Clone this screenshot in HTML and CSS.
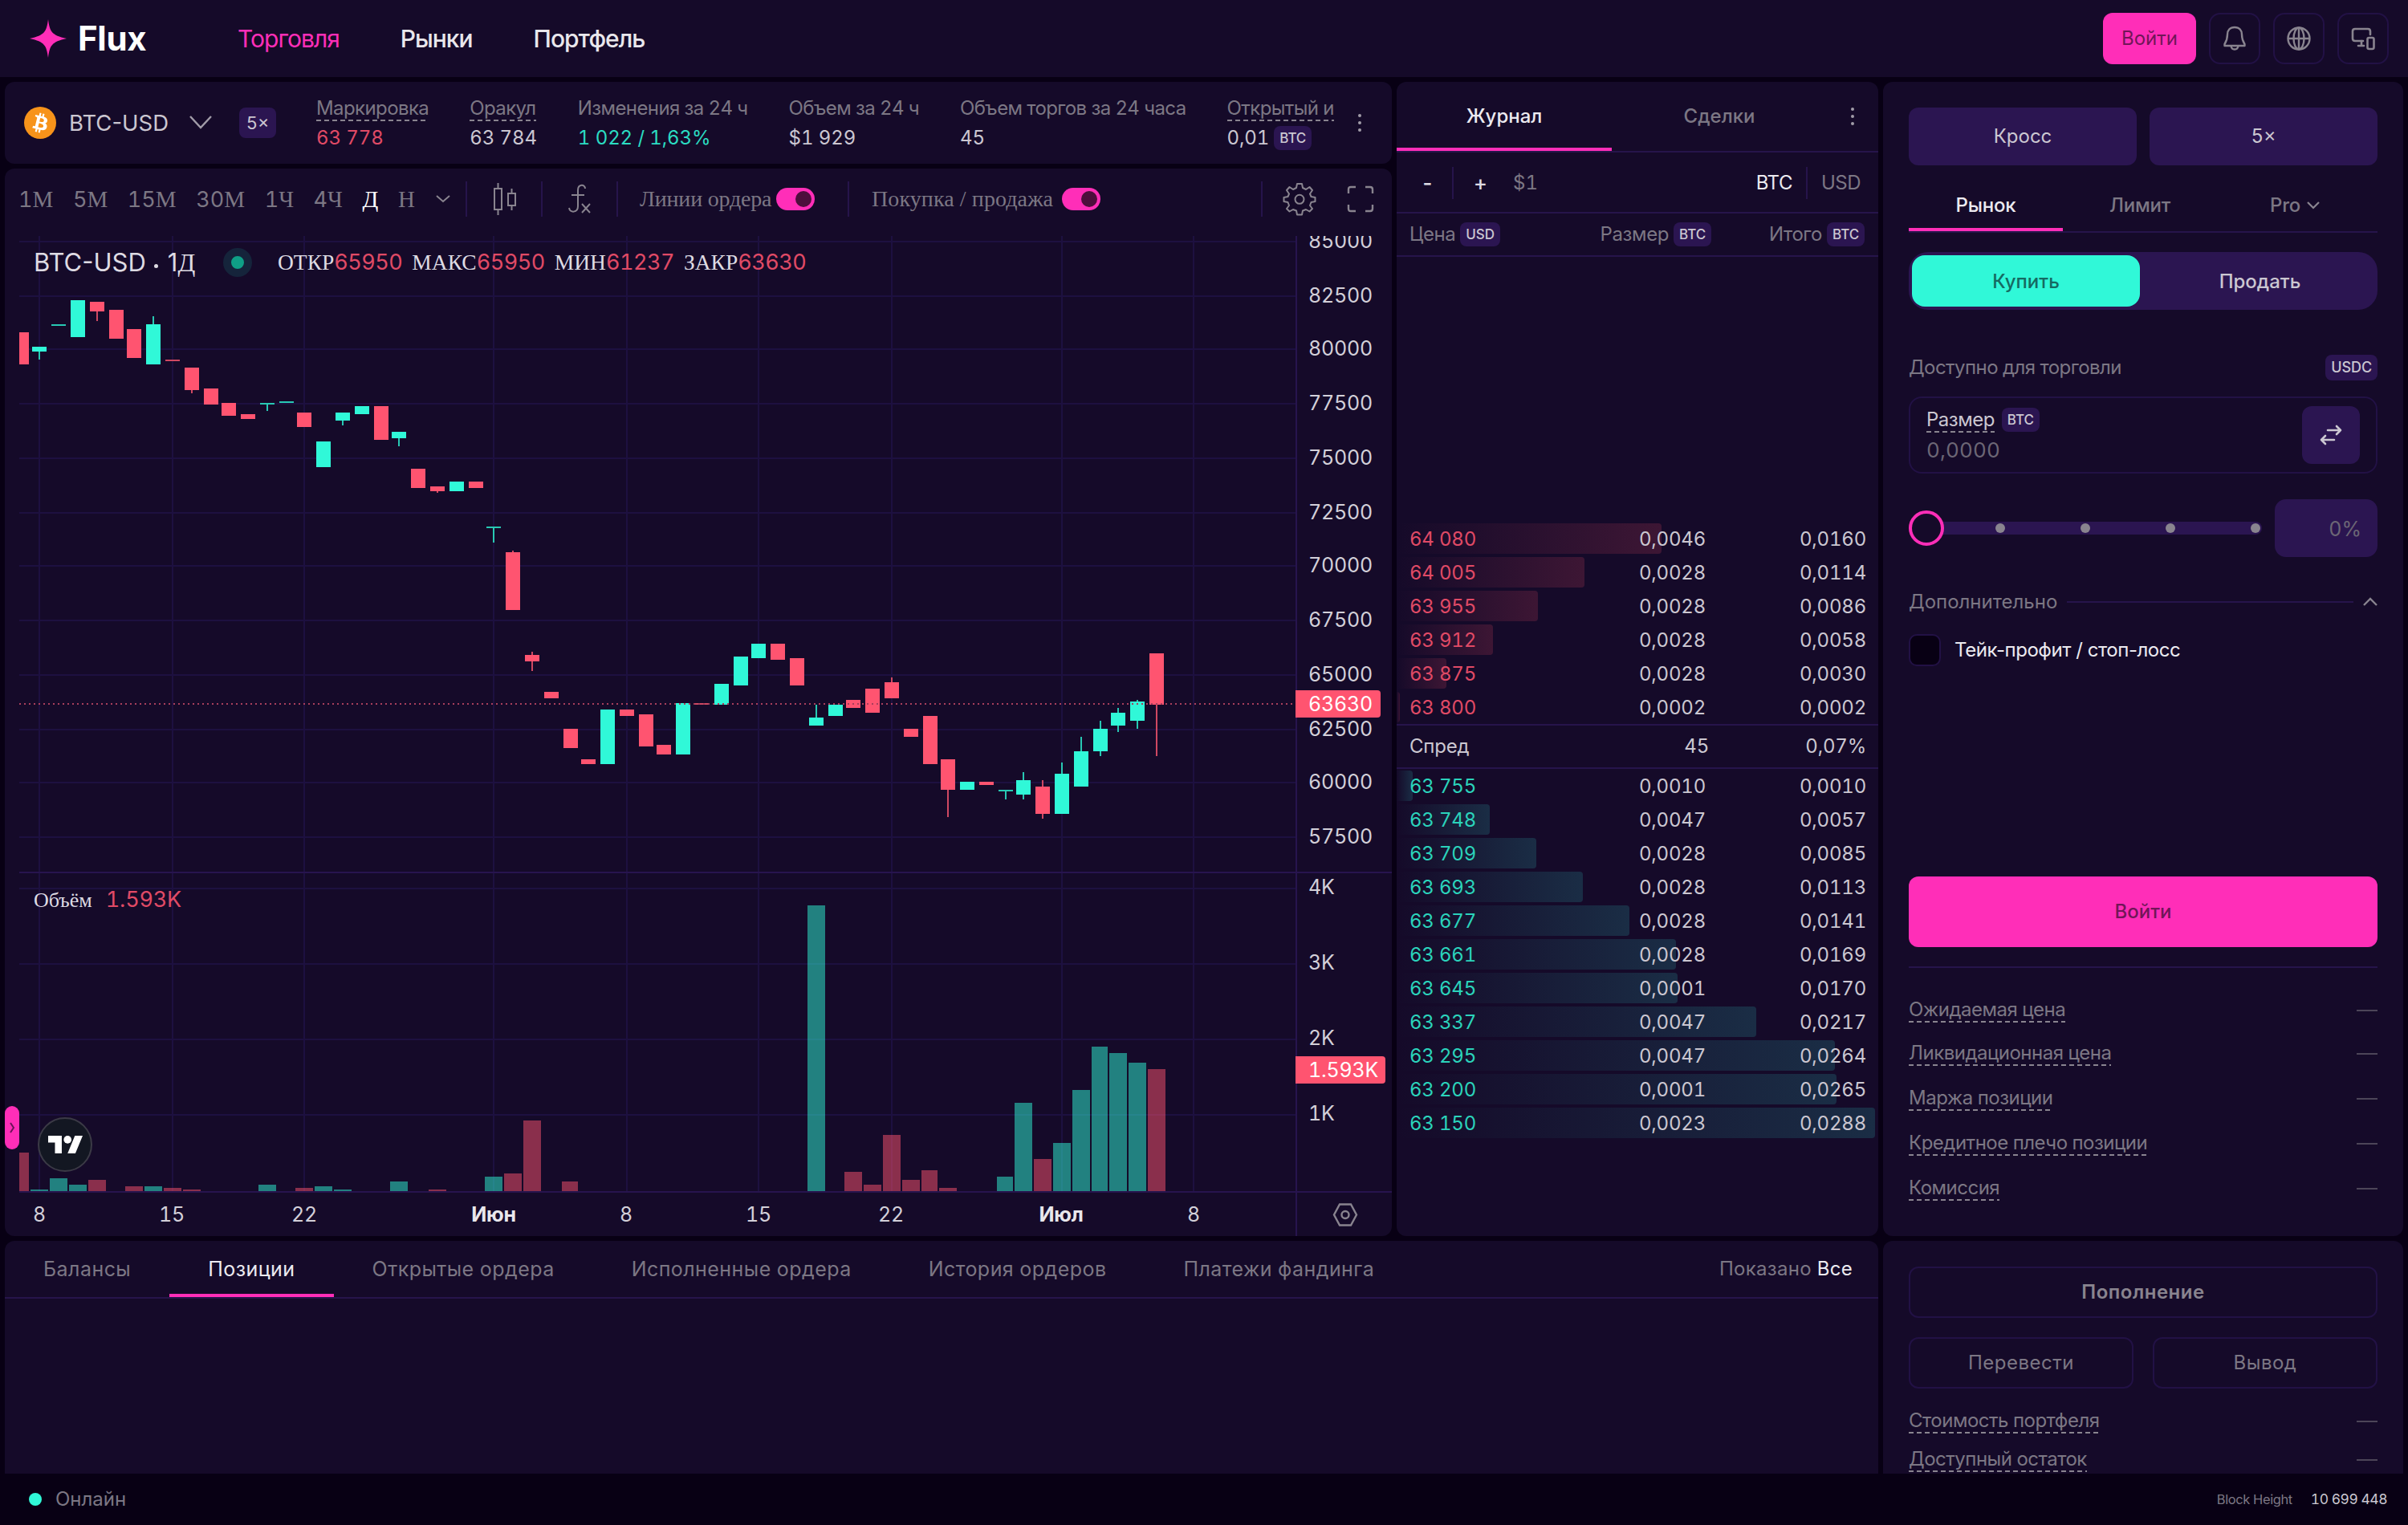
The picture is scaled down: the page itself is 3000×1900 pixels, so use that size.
FILE: index.html
```html
<!DOCTYPE html>
<html lang="ru">

<head>
    <meta charset="UTF-8">
    <meta name="viewport" content="width=device-width, initial-scale=1.0">
    <title>Flux</title>
    <link rel="stylesheet" href="styles.css">
</head>

<body>

    <header class="header">
        <div class="logo">
            <svg width="46" height="48" viewBox="0 0 46 48">
                <path fill="#ff2eb8" d="M23 0C25 15 27 20 46 24C27 28 25 33 23 48C21 33 19 28 0 24C19 20 21 15 23 0Z" />
            </svg>
            <span>Flux</span>
        </div>
        <nav class="nav">
            <a class="active">Торговля</a>
            <a>Рынки</a>
            <a>Портфель</a>
        </nav>
        <div class="header-actions">
            <button class="login">Войти</button>
            <button class="icon-btn">
                <svg width="30" height="34" viewBox="0 0 30 34" fill="none" stroke="#89848f" stroke-width="2.4" stroke-linejoin="round">
                    <path d="M15 3C9 3 6 7 6 12C6 18 5 20 2.500 24V26H27.500V24C25 20 24 18 24 12C24 7 21 3 15 3Z" />
                    <path d="M10.500 26C11 32 19 32 19.500 26" />
                </svg>
            </button>
            <button class="icon-btn">
                <svg width="32" height="32" viewBox="0 0 32 32" fill="none" stroke="#89848f" stroke-width="2.4">
                    <circle cx="16" cy="16" r="13.500" />
                    <ellipse cx="16" cy="16" rx="6.500" ry="13.500" />
                    <path d="M2.500 16H29.500M16 2.500V29.500" />
                </svg>
            </button>
            <button class="icon-btn">
                <svg width="32" height="32" viewBox="0 0 32 32" fill="none" stroke="#89848f" stroke-width="2.6" stroke-linecap="round" stroke-linejoin="round">
                    <path d="M16 19H6C4 19 3 18 3 16V7C3 5 4 4 6 4H22C24 4 25 5 25 7V11" />
                    <path d="M14 19V25M10 25H17" />
                    <rect x="21.500" y="15" width="8" height="14" rx="2" />
                </svg>
            </button>
        </div>
    </header>

    <main class="main">

        <section class="panel market">
            <svg class="coin" width="40" height="40" viewBox="0 0 32 32">
                <circle cx="16" cy="16" r="16" fill="#f7931a" />
                <path fill="#fff" d="M23.189 14.020c.314-2.096-1.283-3.223-3.465-3.975l.708-2.840-1.728-.430-.690 2.765c-.454-.114-.920-.220-1.385-.326l.695-2.783L15.596 6l-.708 2.839c-.376-.086-.746-.170-1.104-.260l.002-.009-2.384-.595-.460 1.846s1.283.294 1.256.312c.700.175.826.638.805 1.006l-.806 3.235c.048.012.110.030.180.057l-.183-.045-1.130 4.532c-.086.212-.303.531-.793.410.018.025-1.256-.313-1.256-.313l-.858 1.978 2.250.561c.418.105.828.215 1.231.318l-.715 2.872 1.727.430.708-2.840c.472.127.930.245 1.378.357l-.706 2.828 1.728.430.715-2.866c2.948.558 5.164.333 6.097-2.333.752-2.146-.037-3.385-1.588-4.192 1.130-.260 1.980-1.003 2.207-2.538zm-3.950 5.538c-.533 2.147-4.148.986-5.320.695l.950-3.805c1.172.293 4.929.872 4.370 3.110zm.535-5.569c-.487 1.953-3.495.960-4.470.717l.860-3.450c.975.243 4.118.696 3.610 2.733z" />
            </svg>
            <span class="pair">BTC-USD</span>
            <svg class="pair-arrow" width="30" height="20" viewBox="0 0 30 20" fill="none" stroke="#a19ca8" stroke-width="2.4">
                <path d="M2 2L15 16L28 2" />
            </svg>
            <span class="lev">5×</span>
            <div class="stats">
                <div class="stat"><span class="label dashed">Маркировка</span><span class="value red">63 778</span></div>
                <div class="stat"><span class="label dashed">Оракул</span><span class="value">63 784</span></div>
                <div class="stat"><span class="label">Изменения за 24 ч</span><span class="value green">1 022 / 1,63%</span></div>
                <div class="stat"><span class="label">Объем за 24 ч</span><span class="value">$1 929</span></div>
                <div class="stat"><span class="label">Объем торгов за 24 часа</span><span class="value">45</span></div>
                <div class="stat"><span class="label dashed">Открытый интерес</span><span class="value">0,01 <i class="tag">BTC</i></span></div>
            </div>
            <span class="kebab"><i></i><i></i><i></i></span>
        </section>

        <section class="panel chart-panel">
            <div class="toolbar">
                <div class="intervals">
                    <span>1<b>М</b></span>
                    <span>5<b>М</b></span>
                    <span>15<b>М</b></span>
                    <span>30<b>М</b></span>
                    <span>1<b>Ч</b></span>
                    <span>4<b>Ч</b></span>
                    <span class="on"><b>Д</b></span>
                    <span><b>Н</b></span>
                </div>
                <svg class="more" width="18" height="12" viewBox="0 0 18 12" fill="none" stroke="#89848f" stroke-width="2"><path d="M1 2L9 9L17 2" /></svg>
                <i class="sep"></i>
                <svg class="tool-candles" width="30" height="42" viewBox="0 0 30 42" fill="none" stroke="#89848f" stroke-width="2">
                    <rect x="2" y="8" width="9" height="26" />
                    <rect x="19" y="14" width="9" height="15" />
                    <path d="M6.500 1V8M6.500 34V41M23.500 8V14M23.500 29V35" />
                </svg>
                <i class="sep"></i>
                <svg class="tool-fx" width="30" height="38" viewBox="0 0 30 38" fill="none" stroke="#89848f" stroke-width="2">
                    <path d="M22 6C22 0 13 0 13 8V28C13 36 3 37 2 30M5 14H21" />
                    <path d="M18 25L28 36M28 25L18 36" />
                </svg>
                <i class="sep"></i>
                <span class="switch-label lines">Линии ордера</span>
                <i class="switch"></i>
                <i class="sep s4"></i>
                <span class="switch-label trades">Покупка / продажа</span>
                <i class="switch"></i>
                <i class="sep s5"></i>
                <svg class="tool-gear" width="42" height="42" viewBox="0 0 42 42" fill="none" stroke="#89848f" stroke-width="2" stroke-linejoin="round">
                    <path d="M18 2H24L25 7L29 9L33.500 6L37 10L34 14.500L35.500 18L40.500 19V24L35.500 25L34 29L37 33L33.500 36.500L29 34L25 35.500L24 40.500H18L17 35.500L13 34L8.500 36.500L5 33L8 29L6.500 25L1.500 24V19L6.500 18L8 14.500L5 10L8.500 6L13 9L17 7Z" />
                    <circle cx="21" cy="21.300" r="5.500" />
                </svg>
                <svg class="tool-full" width="34" height="34" viewBox="0 0 34 34" fill="none" stroke="#89848f" stroke-width="2.400">
                    <path d="M2 10V5Q2 2 5 2H11M23 2H29Q32 2 32 5V10M32 24V29Q32 32 29 32H23M11 32H5Q2 32 2 29V24" />
                </svg>
            </div>
            <div class="chart">
                <svg id="chart" width="1728" height="1246" viewBox="6 294 1728 1246"></svg>
                <div class="legend">
                    <span class="legend-name">BTC-USD<i></i>1<b>Д</b></span>
                    <i class="status"></i>
                    <span class="ohlc"><b>ОТКР</b><em>65950</em></span>
                    <span class="ohlc"><b>МАКС</b><em>65950</em></span>
                    <span class="ohlc"><b>МИН</b><em>61237</em></span>
                    <span class="ohlc"><b>ЗАКР</b><em>63630</em></span>
                </div>
                <div class="legend-vol"><b>Объём</b><em>1.593K</em></div>
                <div class="tv">
                    <svg width="43" height="22" viewBox="0 4 35.500 18" fill="#fff">
                        <path d="M14 22H7V11H0V4h14v18zM28 22h-8l7.500-18h8L28 22z" />
                        <circle cx="20" cy="8" r="4" />
                    </svg>
                </div>
                <div class="handle">
                    <svg width="8" height="14" viewBox="0 0 8 14" fill="none" stroke="#6b1259" stroke-width="2"><path d="M2 1L6 7L2 13" /></svg>
                </div>
            </div>
        </section>

        <section class="panel book">
            <div class="book-tabs">
                <span class="on">Журнал</span>
                <span>Сделки</span>
                <span class="kebab"><i></i><i></i><i></i></span>
            </div>
            <div class="book-step">
                <span class="minus">-</span>
                <i class="sep"></i>
                <span class="plus">+</span>
                <span class="step">$1</span>
                <span class="unit on">BTC</span>
                <i class="sep"></i>
                <span class="unit">USD</span>
            </div>
            <div class="book-head">
                <span>Цена <i class="tag">USD</i></span>
                <span>Размер <i class="tag">BTC</i></span>
                <span>Итого <i class="tag">BTC</i></span>
            </div>
            <div class="asks" id="asks"></div>
            <div class="spread"><span>Спред</span><span>45</span><span>0,07%</span></div>
            <div class="bids" id="bids"></div>
        </section>

        <section class="panel order">
            <div class="pair-btns">
                <button>Кросс</button>
                <button>5×</button>
            </div>
            <div class="order-tabs">
                <span class="on">Рынок</span>
                <span>Лимит</span>
                <span>Pro <svg width="16" height="10" viewBox="0 0 16 10" fill="none" stroke="#89848f" stroke-width="2.200"><path d="M1 1L8 8L15 1" /></svg></span>
            </div>
            <div class="side">
                <span class="buy">Купить</span>
                <span class="sell">Продать</span>
            </div>
            <div class="avail"><span>Доступно для торговли</span><i class="tag big">USDC</i></div>
            <div class="size">
                <div class="size-text">
                    <div class="size-label"><span class="dashed">Размер</span><i class="tag">BTC</i></div>
                    <div class="size-value">0,0000</div>
                </div>
                <button class="swap">
                    <svg width="28" height="28" viewBox="0 0 28 28" fill="none" stroke="#cbc7d1" stroke-width="2.600" stroke-linecap="round" stroke-linejoin="round">
                        <path d="M10 8H26M21 3L26 8L21 13M18 20H2M7 15L2 20L7 25" />
                    </svg>
                </button>
            </div>
            <div class="slider-row">
                <div class="slider">
                    <i class="thumb"></i><i class="dot"></i><i class="dot"></i><i class="dot"></i><i class="dot"></i>
                </div>
                <div class="pct">0%</div>
            </div>
            <div class="extra">
                <span>Дополнительно</span>
                <i class="rule"></i>
                <svg width="18" height="12" viewBox="0 0 18 12" fill="none" stroke="#89848f" stroke-width="2.400"><path d="M1 10L9 2L17 10" /></svg>
            </div>
            <div class="check"><i class="box"></i><span>Тейк-профит / стоп-лосс</span></div>
            <button class="submit">Войти</button>
            <div class="details">
                <div><span class="dashed">Ожидаемая цена</span><i></i></div>
                <div><span class="dashed">Ликвидационная цена</span><i></i></div>
                <div><span class="dashed">Маржа позиции</span><i></i></div>
                <div><span class="dashed">Кредитное плечо позиции</span><i></i></div>
                <div><span class="dashed">Комиссия</span><i></i></div>
            </div>
        </section>

        <section class="panel positions">
            <div class="pos-tabs">
                <span>Балансы</span>
                <span class="on">Позиции</span>
                <span>Открытые ордера</span>
                <span>Исполненные ордера</span>
                <span>История ордеров</span>
                <span>Платежи фандинга</span>
                <div class="shown">Показано <em>Все</em></div>
            </div>
        </section>

        <section class="panel account">
            <button class="deposit">Пополнение</button>
            <div class="account-btns">
                <button>Перевести</button>
                <button>Вывод</button>
            </div>
            <div class="account-rows">
                <div><span class="dashed">Стоимость портфеля</span><i></i></div>
                <div><span class="dashed">Доступный остаток</span><i></i></div>
            </div>
        </section>

    </main>

    <footer class="footer">
        <i class="online"></i>
        <span class="online-text">Онлайн</span>
        <span class="block">Block Height</span>
        <span class="block-num">10 699 448</span>
    </footer>

    <script>

        // [day, color, body top, body bottom, high, low]
        let candles = [
            [-1, "r", 414, 454], [0, "g", 432, 438, 432, 448], [1, "g", 404, 406], [2, "g", 374, 420],
            [3, "r", 376, 388, 376, 400], [4, "r", 386, 422], [5, "r", 410, 446], [6, "g", 404, 454, 394, 454],
            [7, "r", 448, 450], [8, "r", 458, 486, 458, 490], [9, "r", 484, 504], [10, "r", 502, 518],
            [11, "r", 516, 522], [12, "g", 502, 504, 502, 512], [13, "g", 500, 502], [14, "r", 514, 532],
            [15, "g", 550, 582], [16, "g", 514, 524, 514, 530], [17, "g", 506, 516], [18, "r", 506, 548],
            [19, "g", 538, 546, 538, 556], [20, "r", 584, 608], [21, "r", 606, 612, 606, 614], [22, "g", 600, 612],
            [23, "r", 600, 608], [24, "g", 656, 658, 656, 676], [25, "r", 688, 760, 686, 760], [26, "r", 816, 824, 812, 836],
            [27, "r", 862, 870], [28, "r", 908, 932], [29, "r", 946, 952], [30, "g", 884, 952],
            [31, "r", 884, 892], [32, "r", 890, 930], [33, "r", 928, 940], [34, "g", 876, 940],
            [35, "r", 876, 878], [36, "g", 852, 878], [37, "g", 818, 854], [38, "g", 802, 820],
            [39, "r", 802, 822], [40, "r", 820, 854], [41, "g", 894, 904, 878, 904], [42, "g", 878, 892],
            [43, "r", 872, 882], [44, "r", 858, 888], [45, "r", 850, 870, 844, 870], [46, "r", 908, 918],
            [47, "r", 892, 952], [48, "r", 946, 984, 946, 1018], [49, "g", 974, 984], [50, "r", 974, 978],
            [51, "g", 984, 986, 984, 996], [52, "g", 972, 990, 962, 996], [53, "r", 980, 1014, 972, 1020], [54, "g", 964, 1014, 950, 1014],
            [55, "g", 936, 980, 918, 980], [56, "g", 908, 936, 898, 942], [57, "g", 888, 904, 882, 912], [58, "g", 874, 898, 872, 908],
            [59, "r", 814, 878, 814, 942]
        ];

        // [day, color, bar top]
        let volumes = [
            [-1, "r", 1436], [0, "g", 1482], [1, "g", 1468], [2, "g", 1476], [3, "r", 1470], [5, "r", 1478], [6, "g", 1478],
            [7, "r", 1480], [8, "r", 1482], [12, "g", 1476], [14, "r", 1480], [15, "g", 1478], [16, "g", 1482], [19, "g", 1472],
            [21, "r", 1482], [24, "g", 1466], [25, "r", 1462], [26, "r", 1396], [28, "r", 1472], [41, "g", 1128], [43, "r", 1460],
            [44, "r", 1476], [45, "r", 1414], [46, "r", 1470], [47, "r", 1458], [48, "r", 1480], [51, "g", 1466], [52, "g", 1374],
            [53, "r", 1444], [54, "g", 1424], [55, "g", 1358], [56, "g", 1304], [57, "g", 1312], [58, "g", 1324], [59, "r", 1332]
        ];

        let prices = [85000, 82500, 80000, 77500, 75000, 72500, 70000, 67500, 65000, 62500, 60000, 57500];
        let days = [[49, "8"], [214, "15"], [379, "22"], [615, "Июн"], [780, "8"], [945, "15"], [1110, "22"], [1322, "Июл"], [1487, "8"]];

        let chart = document.querySelector("#chart");
        let out = "";

        function dayX(i) {
            return 2 * Math.round((48.8 + 23.58 * i) / 2) + 1;
        }

        function rect(x, y, w, h, cls) {
            let left = Math.max(x, 24);
            out += `<rect x="${left}" y="${y}" width="${w - (left - x)}" height="${h}" class="${cls}"/>`;
        }

        function text(x, y, str, cls) {
            out += `<text x="${x}" y="${y}" class="${cls}">${str}</text>`;
        }

        prices.forEach((p, i) => {
            let y = 300 + Math.round(i * 33.74) * 2;
            rect(24, y, 1590, 2, "grid");
            text(1630, y + 8.5, p, "axis");
        });
        ["4K", "3K", "2K", "1K"].forEach((k, i) => {
            let y = 1106 + i * 94;
            rect(24, y, 1590, 2, "grid");
            text(1630, y + 8, k, "axis");
        });
        for (let [x, label] of days) {
            rect(x % 2 ? x - 1 : x, 294, 2, 1190, "grid");
            text(x, 1522, label, label.length > 2 ? "time month" : "time");
        }
        for (let [i, c, top] of volumes) {
            rect(dayX(i) - 11, top, dayX(i + 1) - dayX(i) - 2, 1484 - top, "vol-" + c);
        }
        for (let [i, c, top, bottom, high, low] of candles) {
            let x = dayX(i);
            if (high) rect(x - 1, high, 2, low - high, "wick-" + c);
            rect(x - 9, top, 18, bottom - top, bottom - top < 3 ? "wick-" + c : "fill-" + c);
        }
        out += `<line x1="24" y1="877" x2="1614" y2="877" class="last"/>`;
        rect(24, 1086, 1710, 2, "axis-line");
        rect(24, 1484, 1710, 2, "axis-line");
        rect(1614, 294, 2, 1246, "axis-line");
        out += `<path d="M1614 860H1716Q1720 860 1720 864V890Q1720 894 1716 894H1614Z" class="fill-r"/>`;
        out += `<path d="M1614 1316H1722Q1726 1316 1726 1320V1346Q1726 1350 1722 1350H1614Z" class="fill-r"/>`;
        text(1630, 886, "63630", "axis tag-text");
        text(1630, 1342, "1.593K", "axis tag-text");
        out += `<path d="M1669 1500.500H1683L1690 1513.500L1683 1526.500H1669L1662 1513.500Z" class="hex"/><circle cx="1676" cy="1513.500" r="4.500" class="hex"/>`;
        chart.innerHTML = out;

        let asks = [["64 080", "0,0046", "0,0160", 330], ["64 005", "0,0028", "0,0114", 234], ["63 955", "0,0028", "0,0086", 176],
            ["63 912", "0,0028", "0,0058", 120], ["63 875", "0,0028", "0,0030", 62], ["63 800", "0,0002", "0,0002", 4]];
        let bids = [["63 755", "0,0010", "0,0010", 20], ["63 748", "0,0047", "0,0057", 116], ["63 709", "0,0028", "0,0085", 174],
            ["63 693", "0,0028", "0,0113", 232], ["63 677", "0,0028", "0,0141", 290], ["63 661", "0,0028", "0,0169", 348],
            ["63 645", "0,0001", "0,0170", 350], ["63 337", "0,0047", "0,0217", 448], ["63 295", "0,0047", "0,0264", 546],
            ["63 200", "0,0001", "0,0265", 548], ["63 150", "0,0023", "0,0288", 596]];

        function fillBook(id, rows) {
            document.getElementById(id).innerHTML = rows.map(([price, size, total, w]) =>
                `<div class="book-row" style="--depth: ${w}px"><span>${price}</span><span>${size}</span><span>${total}</span></div>`).join("");
        }

        fillBook("asks", asks);
        fillBook("bids", bids);

    </script>
</body>

</html>
```

FILE: styles.css
```css
* {
    box-sizing: border-box;
}

body {
    margin: 0;
    width: 3000px;
    height: 1900px;
    overflow: hidden;
    display: flex;
    flex-direction: column;
    background: #080014;
    color: #cbc7d1;
    font-family: Inter, "Liberation Sans", sans-serif;
    font-size: 24px;
    line-height: 30px;
    font-variant-numeric: tabular-nums;
}

button {
    font: inherit;
    color: inherit;
    padding: 0;
    border: 0;
    background: none;
    display: flex;
    align-items: center;
    justify-content: center;
}

i, em {
    font-style: normal;
}

svg {
    display: block;
    flex: none;
}

.panel {
    background: #150a29;
    border-radius: 12px;
    overflow: hidden;
}

.red {
    color: #e04a66;
}

.green {
    color: #2bdcc2;
}

.tag {
    display: inline-flex;
    align-items: center;
    justify-content: center;
    height: 30px;
    padding: 0 7px;
    border-radius: 8px;
    background: #2b1551;
    color: #cbc7d1;
    font-size: 17px;
    font-weight: 500;
    letter-spacing: -.1px;
}

.tag.big {
    height: 32px;
    font-size: 18px;
}

.dashed {
    position: relative;
}

.dashed::after {
    content: "";
    position: absolute;
    left: 0;
    right: 0;
    bottom: -1px;
    height: 2px;
    background: repeating-linear-gradient(90deg, #89848f 0 6px, transparent 6px 10px);
}

.kebab {
    display: flex;
    flex-direction: column;
    align-items: center;
    gap: 5px;
}

.kebab i {
    width: 4px;
    height: 4px;
    border-radius: 2px;
    background: #a19ca8;
}

.sep {
    width: 2px;
    background: #26144b;
}

/* header */

.header {
    height: 96px;
    flex: none;
    display: flex;
    align-items: center;
    background: #150a29;
    padding: 0 24px 0 37px;
}

.logo {
    display: flex;
    align-items: center;
    width: 259px;
    gap: 14px;
    color: #fff;
    font-size: 42px;
    font-weight: 700;
    letter-spacing: -.3px;
}

.nav {
    display: flex;
    gap: 76px;
    font-size: 30px;
    font-weight: 500;
    letter-spacing: -1px;
    color: #e9e7ec;
}

.nav .active {
    color: #ff2eb8;
    font-weight: 400;
}

.header-actions {
    margin-left: auto;
    display: flex;
    gap: 16px;
}

.login {
    width: 116px;
    height: 64px;
    border-radius: 12px;
    background: #ff2eb8;
    color: #711658;
}

.icon-btn {
    width: 64px;
    height: 64px;
    border: 2px solid #221145;
    border-radius: 14px;
}

.main {
    flex: none;
    height: 1740px;
    padding: 6px 6px 0;
    display: grid;
    grid-template-columns: 1728px 600px 648px;
    grid-template-rows: 102px 1330px 290px;
    gap: 6px;
}

/* market bar */

.market {
    display: flex;
    align-items: center;
    padding: 0 38px 0 24px;
}

.pair {
    margin-left: 16px;
    width: 126px;
    font-size: 27.5px;
    font-variant-numeric: normal;
    white-space: nowrap;
}

.pair-arrow {
    margin-left: 23px;
}

.lev {
    margin-left: 33px;
    width: 46px;
    height: 38px;
    display: flex;
    align-items: center;
    justify-content: center;
    border-radius: 8px;
    background: #2b1551;
    font-size: 22px;
    flex: none;
}

.stats {
    margin-left: 50px;
    width: 1268px;
    flex: none;
    display: flex;
    gap: 51px;
    overflow: hidden;
    white-space: nowrap;
}

.stat {
    display: flex;
    flex-direction: column;
    align-items: flex-start;
    gap: 7px;
}

.stat .label {
    color: #7c7784;
    letter-spacing: -.6px;
}

.stat .value {
    display: flex;
    align-items: center;
    gap: 6px;
    height: 30px;
    letter-spacing: -.1px;
}

.market .kebab {
    margin-left: auto;
}

/* chart */

.chart-panel {
    display: flex;
    flex-direction: column;
}

.toolbar {
    height: 84px;
    flex: none;
    display: flex;
    align-items: center;
    padding: 0 22px 8px 17px;
    color: #7c7784;
    font-size: 27px;
}

.intervals {
    width: 494px;
    display: flex;
    justify-content: space-between;
}

.toolbar b, .legend b, .legend-vol b, .switch-label {
    font-family: "Liberation Serif", serif;
    font-weight: 400;
}

.toolbar b {
    font-size: 29px;
}

.intervals .on {
    color: #fff;
}

.more {
    margin: 0 19px 0 26px;
}

.toolbar .sep {
    height: 44px;
}

.tool-candles {
    margin: 0 30px 0 32px;
}

.tool-fx {
    margin: 0 31px;
}

.switch-label {
    font-size: 28px;
    white-space: nowrap;
}

.lines {
    margin-left: 27px;
    width: 170px;
    letter-spacing: -.2px;
}

.trades {
    margin-left: 28px;
    width: 237px;
    letter-spacing: .1px;
}

.switch {
    width: 48px;
    height: 28px;
    border-radius: 14px;
    background: #ff2eb8;
    display: flex;
    align-items: center;
    justify-content: flex-end;
    padding-right: 4px;
}

.switch::after {
    content: "";
    width: 20px;
    height: 20px;
    border-radius: 50%;
    background: #4d0e3c;
}

.s4 {
    margin-left: 41px;
}

.s5 {
    margin-left: auto;
}

.tool-gear {
    margin: 0 38px 0 25px;
}

.chart {
    position: relative;
    height: 1246px;
}

.grid {
    fill: #1d1040;
}

.axis-line {
    fill: #27144e;
}

.fill-g {
    fill: #30f8d8;
}

.fill-r {
    fill: #ff5470;
}

.wick-g {
    fill: #28c8b3;
}

.wick-r {
    fill: #cf4862;
}

.vol-g {
    fill: #30f8d8;
    opacity: .5;
}

.vol-r {
    fill: #ff5470;
    opacity: .5;
}

.last {
    stroke: #a83e5c;
    stroke-width: 2;
    stroke-dasharray: 2 4;
}

.hex {
    fill: none;
    stroke: #89848f;
    stroke-width: 2.4;
}

.axis, .time {
    fill: #d3d0d9;
    font-size: 25px;
    letter-spacing: -.2px;
}

.time {
    text-anchor: middle;
}

.month {
    font-weight: 700;
    fill: #e9e7ec;
}

.tag-text {
    fill: #fff;
}

.legend {
    position: absolute;
    left: 36px;
    top: 15px;
    height: 36px;
    display: flex;
    align-items: center;
    color: #dedbe3;
    font-size: 27px;
}

.legend-name {
    font-size: 31px;
    width: 208px;
    font-variant-numeric: normal;
    white-space: nowrap;
}

.legend-name i {
    display: inline-block;
    width: 5px;
    height: 5px;
    margin: 0 12px 4px 10px;
    border-radius: 50%;
    background: #dedbe3;
}

.legend b {
    font-size: 27.5px;
}

.legend .legend-name b {
    font-size: 32px;
}

.legend em {
    letter-spacing: -.5px;
}

.legend em, .legend-vol em {
    color: #e04a66;
}

.status {
    width: 36px;
    height: 36px;
    margin: 0 32px 0 28px;
    border: 10px solid #15243b;
    border-radius: 50%;
    background: #0f9f86;
}

.ohlc {
    margin-right: 12px;
}

.legend-vol {
    position: absolute;
    left: 36px;
    top: 812px;
    display: flex;
    align-items: baseline;
    gap: 17px;
    font-size: 27px;
    letter-spacing: -.2px;
}

.legend-vol b {
    font-size: 26px;
    letter-spacing: 0;
    color: #dedbe3;
}

.tv {
    position: absolute;
    left: 41px;
    top: 1098px;
    width: 68px;
    height: 68px;
    display: flex;
    align-items: center;
    justify-content: center;
    border: 2px solid #3b3a46;
    border-radius: 50%;
    background: #131722;
}

.handle {
    position: absolute;
    left: 0;
    top: 1084px;
    width: 18px;
    height: 54px;
    display: flex;
    align-items: center;
    justify-content: center;
    border-radius: 9px;
    background: #ff2eb8;
}

/* order book */

.book {
    grid-column: 2;
    grid-row: 1 / 3;
    display: flex;
    flex-direction: column;
}

.book-tabs {
    height: 88px;
    flex: none;
    display: flex;
    border-bottom: 2px solid #26144b;
    color: #7c7784;
    font-weight: 500;
}

.book-tabs > span {
    width: 268px;
    display: flex;
    align-items: center;
    justify-content: center;
}

.book-tabs > .kebab {
    width: 64px;
    gap: 5px;
}

.on {
    color: #eceaf0;
}

.book-tabs .on {
    border-bottom: 4px solid #ff2eb8;
    padding-top: 4px;
}

.book-step {
    height: 76px;
    flex: none;
    display: flex;
    align-items: center;
    border-bottom: 2px solid #26144b;
    padding: 1px 22px 0 0;
    color: #7c7784;
}

.book-step .sep {
    height: 40px;
}

.minus, .plus {
    width: 69px;
    text-align: center;
    color: #dedbe3;
    font-weight: 500;
    font-size: 26px;
}

.minus {
    padding-left: 8px;
}

.plus {
    padding-right: 2px;
}

.step {
    margin-left: 5px;
    margin-right: auto;
}

.unit {
    letter-spacing: -.5px;
}

.unit.on {
    margin-right: 17px;
}

.sep + .unit {
    margin-left: 17px;
}

.book-head {
    height: 54px;
    flex: none;
    display: grid;
    grid-template-columns: 140px 236px 1fr;
    align-items: center;
    border-bottom: 2px solid #26144b;
    padding: 0 17px 0 16px;
    color: #7c7784;
    letter-spacing: -.4px;
}

.book-head span {
    display: flex;
    align-items: center;
    gap: 6px;
    white-space: nowrap;
}

.book-head span + span {
    justify-content: flex-end;
}

.asks {
    margin-top: 330px;
}

.book-row, .spread {
    height: 42px;
    position: relative;
    display: grid;
    grid-template-columns: 140px 229px 1fr;
    align-items: center;
    padding: 1px 15px 0 16px;
    letter-spacing: -.2px;
}

.book-row span + span, .spread span + span {
    text-align: right;
}

.book-row span {
    position: relative;
}

.book-row::before {
    content: "";
    position: absolute;
    left: 0;
    top: 2px;
    width: var(--depth);
    height: 38px;
    border-radius: 0 4px 4px 0;
}

.asks .book-row::before {
    background: linear-gradient(90deg, #150a29, #3d1634);
}

.bids .book-row::before {
    background: linear-gradient(90deg, #150a29, #1a2d45);
}

.asks span:first-child {
    color: #e04a66;
}

.bids span:first-child {
    color: #2bd3bb;
}

.spread {
    height: 56px;
    flex: none;
    grid-template-columns: 140px 233px 1fr;
    padding-top: 0;
    border-top: 2px solid #26144b;
    border-bottom: 2px solid #26144b;
}

/* order form */

.order {
    grid-column: 3;
    grid-row: 1 / 3;
    padding: 32px;
}

.pair-btns {
    display: grid;
    grid-template-columns: 1fr 1fr;
    gap: 16px;
}

.pair-btns button {
    height: 72px;
    border-radius: 12px;
    background: #2b1551;
}

.order-tabs {
    margin-top: 16px;
    height: 68px;
    display: flex;
    border-bottom: 2px solid #26144b;
    color: #7c7784;
    font-weight: 500;
}

.order-tabs span {
    width: 192px;
    display: flex;
    align-items: center;
    justify-content: center;
    gap: 8px;
    padding-top: 1px;
    letter-spacing: -.2px;
}

.order-tabs span:last-child {
    padding-left: 2px;
}

.order-tabs .on {
    border-bottom: 4px solid #ff2eb8;
    padding-top: 5px;
}

.side {
    margin-top: 24px;
    height: 72px;
    padding: 4px;
    display: flex;
    border-radius: 24px;
    background: #2b1551;
    font-weight: 500;
}

.side span {
    flex: 1;
    display: flex;
    align-items: center;
    justify-content: center;
    padding-top: 2px;
}

.side .buy {
    flex: none;
    width: 284px;
    border-radius: 16px;
    background: #30f8d8;
    color: #156a62;
}

.side .sell {
    padding-left: 7px;
}

.avail {
    margin-top: 56px;
    height: 32px;
    display: flex;
    align-items: center;
    justify-content: space-between;
    color: #7c7784;
    letter-spacing: -.55px;
}

.size {
    margin-top: 20px;
    height: 96px;
    border: 2px solid #221145;
    border-radius: 16px;
    display: flex;
    align-items: center;
    justify-content: space-between;
    padding: 0 20px;
}

.size-label {
    display: flex;
    align-items: center;
    gap: 9px;
    letter-spacing: -.5px;
}

.size-value {
    margin-top: 8px;
    font-size: 26px;
    letter-spacing: .1px;
    color: #6c6675;
}

.swap {
    width: 72px;
    height: 72px;
    border-radius: 12px;
    background: #2b1551;
}

.slider-row {
    margin-top: 32px;
    height: 72px;
    display: flex;
    align-items: center;
    justify-content: space-between;
}

.slider {
    width: 440px;
    height: 16px;
    display: flex;
    align-items: center;
    justify-content: space-between;
    padding-right: 2px;
    border-radius: 8px;
    background: #2b1551;
}

.thumb {
    width: 44px;
    height: 44px;
    border: 4px solid #ff2eb8;
    border-radius: 50%;
    background: #150a29;
    margin-right: -30px;
}

.dot {
    width: 12px;
    height: 12px;
    border-radius: 50%;
    background: #89848f;
}

.pct {
    width: 128px;
    height: 72px;
    border-radius: 14px;
    background: #2b1551;
    color: #6c6675;
    text-align: right;
    font-size: 25px;
    line-height: 74px;
    padding-right: 20px;
}

.extra {
    margin-top: 41px;
    height: 30px;
    display: flex;
    align-items: center;
    color: #7c7784;
    gap: 12px;
}

.rule {
    flex: 1;
    height: 2px;
    background: #26144b;
}

.check {
    margin-top: 25px;
    height: 40px;
    display: flex;
    align-items: center;
    gap: 17px;
    color: #eceaf0;
    font-variant-numeric: normal;
    letter-spacing: -.45px;
}

.box {
    width: 40px;
    height: 40px;
    border: 2px solid #221145;
    border-radius: 10px;
    background: #080014;
}

.submit {
    margin-top: 262px;
    width: 100%;
    height: 88px;
    border-radius: 12px;
    background: #ff2eb8;
    color: #711658;
    font-weight: 500;
}

.details {
    margin-top: 24px;
    border-top: 2px solid #26144b;
    padding-top: 37px;
    color: #7c7784;
    letter-spacing: -.5px;
}

.details div, .account-rows div {
    display: flex;
    justify-content: space-between;
    height: 30px;
    margin-bottom: 26px;
}

.details div:first-child {
    margin-bottom: 24px;
}

.details div i, .account-rows i {
    width: 26px;
    height: 2px;
    margin-top: 15px;
    background: #4c4558;
}

/* positions */

.positions {
    grid-column: 1 / 3;
    border-radius: 12px 12px 0 0;
}

.pos-tabs {
    height: 72px;
    display: flex;
    border-bottom: 2px solid #26144b;
    color: #7c7784;
}

.pos-tabs > span {
    padding: 0 48px;
    display: flex;
    align-items: center;
    font-size: 25px;
    letter-spacing: .45px;
}

.pos-tabs .on {
    border-bottom: 4px solid #ff2eb8;
    padding-top: 4px;
}

.shown {
    margin-left: auto;
    padding: 20px 32px 0 0;
    letter-spacing: .3px;
}

.shown em {
    color: #eceaf0;
}

/* account */

.account {
    border-radius: 12px 12px 0 0;
    padding: 32px;
    color: #7c7784;
}

.account button {
    height: 64px;
    width: 100%;
    border: 2px solid #221145;
    border-radius: 12px;
    letter-spacing: .5px;
}

.account .deposit {
    font-weight: 600;
    color: #89848f;
}

.account-btns {
    margin: 24px 0;
    display: grid;
    grid-template-columns: 1fr 1fr;
    gap: 24px;
}

.account-rows {
    letter-spacing: -.5px;
    padding-top: 1px;
}

.account-rows div {
    margin-bottom: 18px;
}

/* footer */

.footer {
    height: 64px;
    flex: none;
    display: flex;
    align-items: center;
    padding: 0 26px 0 36px;
    color: #7c7784;
}

.online {
    width: 16px;
    height: 16px;
    border-radius: 50%;
    background: #30f8d8;
}

.online-text {
    margin-left: 17px;
}

.block {
    margin-left: auto;
    margin-right: 23px;
    font-size: 16.5px;
    letter-spacing: -.4px;
}

.block-num {
    font-size: 17.5px;
    letter-spacing: -.5px;
    color: #cbc7d1;
}
```
